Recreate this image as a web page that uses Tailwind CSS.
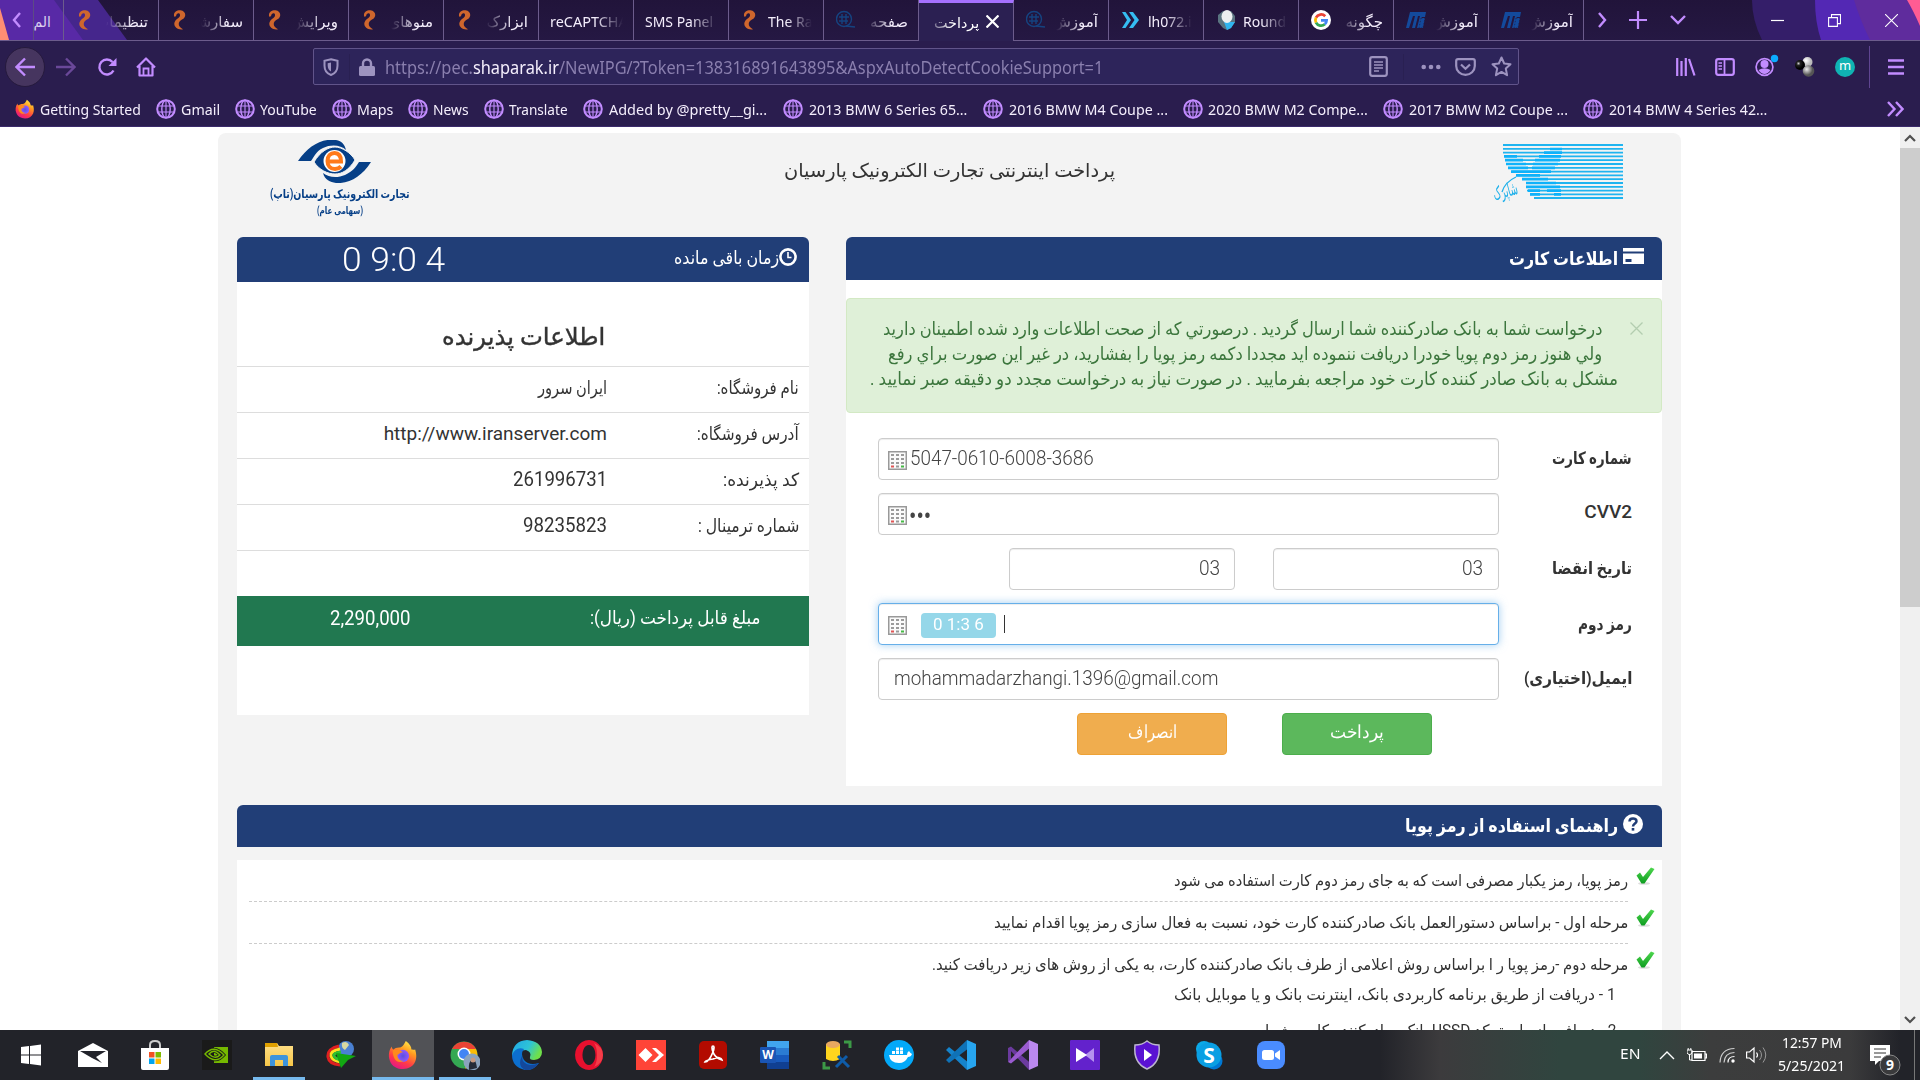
<!DOCTYPE html>
<html lang="fa">
<head>
<meta charset="utf-8">
<title>پرداخت اینترنتی</title>
<script src="https://cdn.jsdelivr.net/npm/@tailwindcss/browser@4"></script>
</head>
<body class="w-[1920px] h-[1080px] overflow-hidden bg-white flex flex-col font-['Noto_Sans','DejaVu_Sans',sans-serif]">

<svg class="absolute w-0 h-0">
  <defs>
    <linearGradient id="ffo" x1="0.8" y1="0" x2="0.3" y2="1"><stop offset="0" stop-color="#fff44f"/><stop offset=".35" stop-color="#ff9a1f"/><stop offset=".7" stop-color="#ff3b47"/><stop offset="1" stop-color="#e31587"/></linearGradient>
    <radialGradient id="ffp"><stop offset="0" stop-color="#5b4fe0"/><stop offset="1" stop-color="#9059ff"/></radialGradient>
    <linearGradient id="edg" x1="0" y1="0" x2="1" y2=".4"><stop offset="0" stop-color="#1fa6e8"/><stop offset=".6" stop-color="#2ec4d6"/><stop offset="1" stop-color="#6fe04a"/></linearGradient>
    <linearGradient id="fold" x1="0" y1="0" x2="0" y2="1"><stop offset="0" stop-color="#ffe08a"/><stop offset="1" stop-color="#f7c648"/></linearGradient>
    <radialGradient id="ballb" cx=".35" cy=".35"><stop offset="0" stop-color="#ccc"/><stop offset=".4" stop-color="#222"/><stop offset="1" stop-color="#000"/></radialGradient>
    <radialGradient id="ballw" cx=".35" cy=".35"><stop offset="0" stop-color="#fff"/><stop offset="1" stop-color="#bbb"/></radialGradient>
    <radialGradient id="ballg" cx=".35" cy=".35"><stop offset="0" stop-color="#eee"/><stop offset="1" stop-color="#555"/></radialGradient>
    <linearGradient id="chk" x1="0" y1="0" x2="0" y2="1"><stop offset="0" stop-color="#4fd84f"/><stop offset="1" stop-color="#0d9c1f"/></linearGradient>
  </defs>
  <symbol id="firefox" viewBox="0 0 32 32"><path d="M19 1c4 3 6 6 6 9 2 0 3 1 4 0 1 4 2 8 0 13-2 5-7 8-13 8S4 28 2 22C0 17 1 11 4 7c0 2 1 3 2 3 1-1 3-2 6-2 3 0 5-3 7-7z" fill="url(#ffo)"/><circle cx="16" cy="17" r="6.5" fill="url(#ffp)"/><path d="M5 11c4-2 8 0 11 2-3 0-4 2-6 3 0 4 3 7 7 6-6 4-12 0-12-11z" fill="#ff8a1c"/></symbol>
  <symbol id="globe" viewBox="0 0 20 20"><g fill="none" stroke="#c28cff"><circle cx="10" cy="10" r="8.8" stroke-width="2"/><ellipse cx="10" cy="10" rx="4.2" ry="8.8" stroke-width="1.4"/><path d="M10 1v18M1.5 7h17M1.5 13h17" stroke-width="1.1"/></g></symbol>
  <symbol id="swirl" viewBox="0 0 20 20"><path d="M3 6C2.500 2 6 0 9.500.300c5.500.700 6.500 6.700 1.500 9.200-4.500 2.500-4.500 7 1 9.800C5.500 20.500 1 15 4.500 10.500 6.500 8 9.300 7.500 9 4.800 8.500 2.500 6 3 5.300 5.200 4.800 6.800 3.200 7.200 3 6z" fill="#cf662d"/></symbol>
  <symbol id="bluenet" viewBox="0 0 20 20"><g fill="none" stroke="#154380" stroke-width="1.4"><circle cx="8" cy="9" r="7.5"/><path d="M3 7h10M3 11h9M6 4v10M10 4v10M10 16l9 1"/></g></symbol>
  <symbol id="chev" viewBox="0 0 20 20"><path d="M1 2h3.500l5.500 8-5.500 8H1l5-8zM8 2h4l6 8-6 8H8l5.500-8z" fill="#35bdf2"/></symbol>
  <symbol id="cube" viewBox="0 0 20 20"><path d="M2 5l5-4h8l4 5v6l-4 6-4 2-4-2-5-6z" fill="#5a7480"/><path d="M8 12h11l-4 6-4 2z" fill="#30b5ef"/><ellipse cx="11" cy="6.500" rx="5.500" ry="6.500" fill="#edf0f0"/></symbol>
  <symbol id="google" viewBox="0 0 20 20"><circle cx="10" cy="10" r="10" fill="#fff"/><g fill="none" stroke-width="2.8"><path d="M14.2 6.2A5.7 5.7 0 0 0 5 7.6" stroke="#ea4335"/><path d="M5 7.6a5.7 5.7 0 0 0 0 5" stroke="#fbbc05"/><path d="M5 12.6a5.7 5.7 0 0 0 8.8 1.7" stroke="#34a853"/><path d="M13.8 14.3a5.7 5.7 0 0 0 1.8-4H10" stroke="#4285f4"/></g></symbol>
  <symbol id="bars" viewBox="0 0 20 20"><path d="M4 2h16l-1 5h-3l-2 11h-3l3-12h-2L9 18H6L9 6H7L3 18H0z" fill="#134a9c"/><path d="M15 8h4l-2 10h-4z" fill="#134a9c" stroke="#22173d" stroke-width=".6" stroke-dasharray="1.5 1.5"/></symbol>
  <symbol id="keypad" viewBox="0 0 19 19"><rect x=".75" y=".75" width="17.5" height="17.5" fill="#fafafa" stroke="#999" stroke-width="1.5"/><g fill="#9a9a9a"><path d="M3 3h3v2H3zM8 3h3v2H8zM13 3h3v2h-3zM3 7h3v2H3zM8 7h3v2H8zM13 7h3v2h-3zM3 11h3v2H3zM8 11h3v2H8zM13 11h3v2h-3zM8 14.5h3v2H8z"/></g><path d="M3 14.5h3v2H3z" fill="#e05555"/><path d="M13 14.5h3v2h-3z" fill="#45b845"/></symbol>
  <symbol id="check" viewBox="0 0 19 19"><ellipse cx="8" cy="16.500" rx="6" ry="1.300" fill="#ddd"/><path d="M.5 8.500l3.500-3 3 4.500 8-9.500 3.500 1.500L8.500 16.500H5.500z" fill="url(#chk)"/></symbol>
</svg>

<header class="h-[127px] shrink-0 bg-[#2a1d4e] text-[#f4eefc] border-b border-[#3b2a6b] flex flex-col">
  <div class="h-[41px] shrink-0 relative flex bg-linear-to-b from-[#21143a] to-[#251843] border-b border-[#6c5c8c]">
    <svg class="absolute left-0 top-0 w-[160px] h-[40px]" viewBox="0 0 160 40"><path d="M0 0h98l29 40H0z" fill="#45268c"/><path d="M0 0h54l29 40H0z" fill="#5829a6"/><path d="M0 8l9 32H0z" fill="#ff8d74"/></svg>
    <svg class="absolute right-0 top-0 w-[168px] h-[40px]" viewBox="0 0 168 40"><path d="M0 0h168v40H10Q0 20 0 0z" fill="#341e69"/><path d="M63 0h105v40H69Q63 22 63 0z" fill="#5328b4"/><path d="M102 0h66v40h-50Q108 20 102 0z" fill="#5f2c9d"/><path d="M155 0h13v26Q161 10 155 0z" fill="#ff5c93"/></svg>
    <div class="relative w-[34px] flex items-center justify-center border-r border-[#5d4a85]"><svg class="w-[10px] h-[16px]" viewBox="0 0 10 16"><path d="M8 1L2 8l6 7" fill="none" stroke="#c28cff" stroke-width="2.4"/></svg></div>
    <div class="relative w-[30px] flex items-center pr-3 border-r border-[#6c5c8c] text-[14px] text-[#d9cfee] pt-0.5" dir="rtl">الم</div>
    <div id="tabs" class="relative flex"></div>
    <div class="relative flex items-center text-[#c28cff]">
      <svg class="w-[10px] h-[16px] ml-[13px]" viewBox="0 0 10 16"><path d="M2 1l6 7-6 7" fill="none" stroke="currentColor" stroke-width="2.4"/></svg>
      <svg class="w-[18px] h-[18px] ml-[22px]" viewBox="0 0 18 18"><path d="M9 0v18M0 9h18" stroke="currentColor" stroke-width="2.2"/></svg>
      <svg class="w-[16px] h-[10px] ml-[23px]" viewBox="0 0 16 10"><path d="M1 1l7 7 7-7" fill="none" stroke="currentColor" stroke-width="2.4"/></svg>
      <svg class="w-[13px] h-[13px] ml-[85px]" viewBox="0 0 13 13"><path d="M0 6.5h13" stroke="#fff" stroke-width="1.2"/></svg>
      <svg class="w-[13px] h-[13px] ml-[44px]" viewBox="0 0 13 13"><path d="M.6 3.6h8.800v8.800H.6zM3.500 3.500V.6h9v9H9.600" fill="none" stroke="#fff" stroke-width="1.100"/></svg>
      <svg class="w-[13px] h-[13px] ml-[44px]" viewBox="0 0 13 13"><path d="M0 0l13 13M13 0L0 13" stroke="#fff" stroke-width="1.100"/></svg>
    </div>
  </div>

  <div class="h-[51px] shrink-0 flex items-center text-[#c28cff]">
    <div class="ml-[5px] w-10 h-10 shrink-0 rounded-full bg-[#46355f] border border-[#261a3d] flex items-center justify-center"><svg class="w-5 h-5" viewBox="0 0 20 20"><path d="M20 10H2M10 1.5L1.5 10l8.500 8.500" fill="none" stroke="currentColor" stroke-width="2.4"/></svg></div>
    <svg class="w-5 h-5 shrink-0 ml-[11px] text-[#6a4899]" viewBox="0 0 20 20"><path d="M0 10h18M10 1.500l8.500 8.500-8.500 8.500" fill="none" stroke="currentColor" stroke-width="2.400"/></svg>
    <svg class="w-5 h-5 shrink-0 ml-[21px]" viewBox="0 0 20 20"><path d="M16.500 13.500A7.500 7.500 0 1 1 15.500 5" fill="none" stroke="currentColor" stroke-width="2.400"/><path d="M19.500 1v8h-8z" fill="currentColor"/></svg>
    <svg class="w-5 h-5 shrink-0 ml-[19px]" viewBox="0 0 20 20"><path d="M1 10.500L10 1.500l9 9M3.500 9v9.500h13V9" fill="none" stroke="currentColor" stroke-width="2.200" stroke-linejoin="round"/><path d="M7.500 18v-6.500h5V18" fill="none" stroke="currentColor" stroke-width="1.800"/></svg>
    <div class="ml-[157px] w-[1206px] shrink-0 h-[37px] bg-[#2d245a] border border-[#61548a] rounded-xs flex items-center text-[#9d93bf]">
      <svg class="w-4 h-[18px] shrink-0 ml-[9px]" viewBox="0 0 16 18"><path d="M8 1.200l6.500 1.500v5c0 5-3 8-6.500 9.300C4.500 15.700 1.500 12.700 1.500 7.700v-5z" fill="none" stroke="currentColor" stroke-width="2"/><path d="M8 4.500v9c-2-1-3.300-3-3.300-6V5.200z" fill="currentColor"/></svg>
      <div class="w-px h-[26px] bg-[#292052] ml-2.5"></div>
      <svg class="w-4 h-[18px] shrink-0 ml-[9px]" viewBox="0 0 16 18"><path d="M4 9V5.500a4 4 0 0 1 8 0V9" fill="none" stroke="currentColor" stroke-width="2.400"/><rect y="8" width="16" height="10" rx="1.500" fill="currentColor"/></svg>
      <div class="w-[984px] shrink-0 ml-2.5 pt-0.5 text-[18px] text-[#8a7fae] whitespace-nowrap"><span data-w="718">https://pec.<span class="text-[#f4eefc]">shaparak.ir</span>/NewIPG/?Token=138316891643895&amp;AspxAutoDetectCookieSupport=1</span></div>
      <svg class="w-[19px] h-[21px] shrink-0" viewBox="0 0 19 21"><rect x="1.200" y="1.200" width="16.600" height="18.600" rx="2" fill="none" stroke="currentColor" stroke-width="2.200"/><path d="M5 6h9M5 9h9M5 12h9M5 15h5" stroke="currentColor" stroke-width="1.500"/></svg>
      <div class="w-px h-[26px] bg-[#292052] ml-[15px]"></div>
      <svg class="w-5 h-5 shrink-0 ml-[17px]" viewBox="0 0 20 20"><g fill="currentColor"><circle cx="2.700" cy="10" r="2.300"/><circle cx="10" cy="10" r="2.300"/><circle cx="17.300" cy="10" r="2.300"/></g></svg>
      <svg class="w-[21px] h-[18px] shrink-0 ml-3.5" viewBox="0 0 21 18"><path d="M1.200 3q0-1.800 1.800-1.800h15q1.800 0 1.800 1.800v5a9.300 8.800 0 0 1-18.600 0z" fill="none" stroke="currentColor" stroke-width="2.200"/><path d="M6 6.500l4.500 4.300L15 6.500" fill="none" stroke="currentColor" stroke-width="2.200"/></svg>
      <svg class="w-[21px] h-[21px] shrink-0 ml-[15px]" viewBox="0 0 21 21"><path d="M10.500 1.500l2.700 6 6.300.7-4.700 4.400 1.300 6.600-5.600-3.300-5.600 3.300 1.300-6.600L1.500 8.200l6.300-.7z" fill="none" stroke="currentColor" stroke-width="2" stroke-linejoin="round"/></svg>
    </div>
    <svg class="w-5 h-[18px] shrink-0 ml-[157px]" viewBox="0 0 20 18"><path d="M1.200 0v18M5.500 3v15M9.800 0v18M13 1l5.500 16.500" fill="none" stroke="currentColor" stroke-width="2.200"/></svg>
    <svg class="w-5 h-[18px] shrink-0 ml-[19px]" viewBox="0 0 20 18"><rect x="1.200" y="1.200" width="17.600" height="15.600" rx="2" fill="none" stroke="currentColor" stroke-width="2.200"/><path d="M9.500 1v16" stroke="currentColor" stroke-width="1.800"/><path d="M3.500 5h3.500M3.500 8h3.500M3.500 11h3.500" stroke="currentColor" stroke-width="1.300"/></svg>
    <svg class="w-6 h-[26px] shrink-0 ml-[20px] -mt-[4px]" viewBox="0 0 24 26"><circle cx="9.500" cy="15" r="8.400" fill="none" stroke="currentColor" stroke-width="1.700"/><circle cx="9.500" cy="12" r="4" fill="currentColor"/><path d="M3.500 18q6-3.500 12 0-2.500 4-6 4t-6-4z" fill="currentColor"/><circle cx="19.500" cy="6.500" r="3.700" fill="#0cabff"/></svg>
    <svg class="w-5 h-5 shrink-0 ml-[16px]" viewBox="0 0 20 20"><circle cx="12.500" cy="5" r="5" fill="url(#ballw)"/><circle cx="5" cy="8" r="5" fill="url(#ballb)"/><circle cx="13.500" cy="14" r="5.800" fill="url(#ballg)"/></svg>
    <div class="ml-5 w-5 h-5 shrink-0 rounded-full bg-[#10b3b3] text-white text-[13px] leading-[17px] text-center">m</div>
    <div class="ml-[14px] w-px h-[42px] bg-[#5f4591]"></div>
    <svg class="w-4 h-4 shrink-0 ml-[18px]" viewBox="0 0 16 16"><path d="M0 1.500h16M0 8h16M0 14.500h16" stroke="currentColor" stroke-width="2.300"/></svg>
  </div>

  <div id="marks" class="h-[34px] pl-[15px] flex items-center"></div>
</header>

<main dir="rtl" class="h-[903px] shrink-0 overflow-hidden flex font-['Roboto','DejaVu_Sans',sans-serif] text-[#333]">
  <div class="w-5 bg-[#f0f0f0] shrink-0 flex flex-col items-center">
    <svg class="w-3 h-[21px] shrink-0" viewBox="0 0 12 21"><path d="M1 14l5-5 5 5" fill="none" stroke="#505050" stroke-width="2.200"/></svg>
    <div class="w-full h-[459px] bg-[#cdcdcd]"></div>
    <svg class="w-3 h-[21px] shrink-0 mt-auto" viewBox="0 0 12 21"><path d="M1 8l5 5 5-5" fill="none" stroke="#505050" stroke-width="2.200"/></svg>
  </div>
  <div class="w-[1463px] mr-[219px] mt-[6px] h-[897px] shrink-0 bg-[#f3f3f3] rounded-t-lg px-[19px] flex flex-col">
    <div class="h-[104px] shrink-0 flex items-start">
      <div class="relative w-[130px] shrink-0 mr-[39px] mt-[11px] h-[62px]">
        <svg class="w-[130px] h-[62px]" viewBox="0 0 130 62"><path d="M10 1h120M10 4.800h120M10 8.600h120M12 12.400h118M13 16.200h117M14 20h116M16 23.800h114M19 27.600h111M23 31.400h107M29 35.200h101M33 39h97M33 42.800h97M34 46.600h96M37 50.400h93M41 54h89" stroke="#1fb4f0" stroke-width="1.800"/><path d="M11 12.400h13M12 16.200h18M13 20h20M15 23.800h20M18 27.600h22M23 31.400h24M29 35.200h26M33 39h30M33 42.800h34M35 46.600h12M54 46.600h14M37 50.400h10M61 50.400h7M57 5h12M51 8.600h18M46 12.400h22M42 16.200h25M40 20h25M39 23.800h23M38 27.600h20" stroke="#0eb2fa" stroke-width="2.700"/><path d="M23 33Q12 38 9 48" fill="none" stroke="#1fb0ea" stroke-width="1.300"/></svg>
        <div class="absolute left-0 top-[33px] w-[25px] text-[#1fb0ea] text-[18px] leading-[28px] -rotate-[15deg]"><span data-w="25">شاپرک</span></div>
      </div>
      <div class="text-[19px] leading-7 mt-[24px] mr-[378px]"><span data-w="331">پرداخت اینترنتی تجارت الکترونیک پارسیان</span></div>
      <div class="w-[140px] shrink-0 mr-auto ml-[33px] mt-[7px] flex flex-col items-center text-[#063f87] font-bold">
        <svg class="w-[73px] h-[43px] mr-2 -ml-1" viewBox="0 0 73 43"><path d="M0 21C10 6 24-2 38 0c6 1 9 5 10 10C43 5 33 4 25 8c-7 3-9 9-12 13z" fill="#063f87"/><path d="M73 22C64 36 52 44 38 43c-6-1-11-3-13-10 6 5 15 5 22 2 8-4 11-8 14-13z" fill="#063f87"/><path d="M16 22C22 12 30 7 37 7s16 6 20 13c-6 10-13 14-20 14s-16-4-21-12z" fill="#063f87" stroke="#f3f3f3" stroke-width="1"/><circle cx="36.500" cy="21" r="11" fill="#fff"/><path d="M30.500 21.500H43C43 15 40 13 36.500 13c-4 0-7 3-7 8s3 8 7.500 8c2.500 0 4.500-1 6-2.500" fill="none" stroke="#ff7a1a" stroke-width="4"/></svg>
        <div class="text-[12px] leading-4 mt-[3px]"><span data-w="140">تجارت الکترونیک پارسیان(تاپ)</span></div>
        <div class="text-[10px] leading-3 mt-[3px]"><span data-w="46">(سهامی عام)</span></div>
      </div>
    </div>

    <div class="flex justify-between items-start">
      <section class="w-[816px] h-[549px] bg-white rounded-t-md">
        <div class="h-[43px] bg-[#213e77] rounded-t-md text-white flex items-center pr-[18px]">
          <svg class="w-[21px] h-[16px] shrink-0 -mt-[5px]" viewBox="0 0 21 16"><path d="M0 0h21v3.500H0zM0 5.500h21V16H0zM2.500 11v3h6v-3z" fill="#fff" fill-rule="evenodd"/></svg>
          <div class="mr-[5px] text-[18px] font-bold"><span data-w="109">اطلاعات کارت</span></div>
        </div>
        <div class="mt-[18px] h-[115px] bg-[#dff0d8] border border-[#d3e9c4] rounded text-[#3c763d] pt-[17px] pr-[18px] flex items-start text-[18px]">
          <svg class="w-[13px] h-[13px] shrink-0 mt-[6px]" viewBox="0 0 13 13"><path d="M.5.5l12 12M12.500.5l-12 12" stroke="#b3cdb0" stroke-width="1.300"/></svg>
          <div class="leading-[25px] whitespace-nowrap flex flex-col -mr-[13px]">
            <div class="pr-[41px] h-[25px]"><span data-w="719">درخواست شما به بانک صادرکننده شما ارسال گرديد . درصورتي که از صحت اطلاعات وارد شده اطمينان داريد</span></div>
            <div class="pr-[41px] h-[25px]"><span data-w="714">ولي هنوز رمز دوم پويا خودرا دريافت ننموده ايد مجددا دکمه رمز پويا را بفشاريد، در غير اين صورت براي رفع</span></div>
            <div class="pr-[25px] h-[25px]"><span data-w="748">مشکل به بانک صادر کننده کارت خود مراجعه بفرماييد . در صورت نياز به درخواست مجدد دو دقيقه صبر نماييد .</span></div>
          </div>
        </div>
        <div class="mt-[25px] pr-[30px] flex flex-col gap-[13px] text-[20px] font-light text-[#444]">
          <div class="h-[42px] flex"><div class="w-[133px] shrink-0 pt-[6px] text-[17px] leading-7 font-bold text-[#333]"><span data-w="80">شماره کارت</span></div>
            <div dir="ltr" class="w-[621px] border border-[#ccc] rounded bg-white shadow-[inset_0_1px_1px_rgba(0,0,0,.075)] flex items-start pl-[9px]"><svg class="w-[19px] h-[19px] shrink-0 mt-3"><use href="#keypad"/></svg><div class="ml-[3px] leading-[38px]"><span data-w="184">5047-0610-6008-3686</span></div></div></div>
          <div class="h-[42px] flex"><div class="w-[133px] shrink-0 pt-[5px] text-[19px] leading-7 font-medium text-[#333]"><span data-w="48">CVV2</span></div>
            <div dir="ltr" class="w-[621px] border border-[#ccc] rounded bg-white shadow-[inset_0_1px_1px_rgba(0,0,0,.075)] flex items-start pl-[9px]"><svg class="w-[19px] h-[19px] shrink-0 mt-3"><use href="#keypad"/></svg><div class="ml-0.5 leading-[45px] text-[26px] font-normal"><span data-w="22">•••</span></div></div></div>
          <div class="h-[42px] flex"><div class="w-[133px] shrink-0 pt-[6px] text-[17px] leading-7 font-bold text-[#333]"><span data-w="80">تاریخ انقضا</span></div>
            <div class="w-[226px] border border-[#ccc] rounded bg-white shadow-[inset_0_1px_1px_rgba(0,0,0,.075)] pr-[15px] leading-[38px]"><span data-w="21">03</span></div>
            <div class="w-[226px] mr-[38px] border border-[#ccc] rounded bg-white shadow-[inset_0_1px_1px_rgba(0,0,0,.075)] pr-[14px] leading-[38px]"><span data-w="21">03</span></div></div>
          <div class="h-[42px] flex"><div class="w-[133px] shrink-0 pt-[7px] text-[17px] leading-7 font-bold text-[#333]"><span data-w="54">رمز دوم</span></div>
            <div dir="ltr" class="w-[621px] border border-[#66afe9] rounded bg-white shadow-[inset_0_1px_1px_rgba(0,0,0,.075),0_0_8px_rgba(102,175,233,.6)] flex items-start pl-[9px]"><svg class="w-[19px] h-[19px] shrink-0 mt-3"><use href="#keypad"/></svg>
              <div class="ml-[14px] mt-[9px] w-[75px] h-[25px] rounded bg-[#95d7e9] text-white text-[16px] font-normal leading-[24px] pl-3"><span data-w="51">0 1:3 6</span></div>
              <div class="ml-2 mt-[11px] w-px h-[18px] bg-[#333]"></div></div></div>
          <div class="h-[42px] flex"><div class="w-[133px] shrink-0 pt-[6px] text-[17px] leading-7 font-bold text-[#333]"><span data-w="108">ایمیل(اختیاری)</span></div>
            <div dir="ltr" class="w-[621px] border border-[#ccc] rounded bg-white shadow-[inset_0_1px_1px_rgba(0,0,0,.075)] pl-[15px] leading-[38px]"><span data-w="324">mohammadarzhangi.1396@gmail.com</span></div></div>
          <div class="h-[42px] flex pr-[200px] gap-[55px] text-[18px] text-white text-center leading-[35px]">
            <div class="w-[150px] rounded bg-[#5cb85c] border border-[#4cae4c]"><span data-w="54">پرداخت</span></div>
            <div class="w-[150px] rounded bg-[#f0ad4e] border border-[#eea236]"><span data-w="49">انصراف</span></div>
          </div>
        </div>
      </section>

      <section class="w-[572px] h-[478px] bg-white rounded-t-md">
        <div class="h-[45px] bg-[#213e77] rounded-t-md text-white flex items-center pr-3">
          <svg class="w-[18px] h-[18px] shrink-0 -mt-1.5" viewBox="0 0 18 18"><circle cx="9" cy="9" r="7.600" fill="none" stroke="#fff" stroke-width="2.600"/><path d="M9 4v5.500h3.500" fill="none" stroke="#fff" stroke-width="1.600"/></svg>
          <div class="text-[18px] leading-[40px] -mt-[3px]"><span data-w="105">زمان باقی مانده</span></div>
          <div dir="ltr" class="mr-auto ml-[105px] text-[33px] leading-[44px] font-light"><span data-w="103">0 9:0 4</span></div>
        </div>
        <div class="h-[84px] pt-[39px] text-[24px] leading-8 font-medium pr-[204px] [-webkit-text-stroke:0.4px_#333]"><span data-w="163">اطلاعات پذیرنده</span></div>
        <div class="text-[18px] leading-[41px]">
          <div class="h-[46px] border-t border-[#ddd] flex pr-2.5"><div class="w-[192px]"><span data-w="82">نام فروشگاه:</span></div><div><span data-w="69">ایران سرور</span></div></div>
          <div class="h-[46px] border-t border-[#ddd] flex pr-2.5"><div class="w-[192px]"><span data-w="102">آدرس فروشگاه:</span></div><div class="text-[19px]"><span data-w="223">http://www.iranserver.com</span></div></div>
          <div class="h-[46px] border-t border-[#ddd] flex pr-2.5"><div class="w-[192px]"><span data-w="76">کد پذیرنده:</span></div><div class="text-[20px]"><span data-w="94">261996731</span></div></div>
          <div class="h-[47px] border-y border-[#ddd] flex pr-2.5"><div class="w-[192px]"><span data-w="101">شماره ترمینال :</span></div><div class="text-[20px]"><span data-w="84">98235823</span></div></div>
        </div>
        <div class="mt-[45px] h-[50px] bg-[#217850] text-white flex pr-12 text-[18px] leading-[44px]">
          <div><span data-w="171">مبلغ قابل پرداخت (ریال):</span></div>
          <div class="mr-auto ml-[93px] text-[20px]"><span data-w="81">2,290,000</span></div>
        </div>
      </section>
    </div>

    <div class="mt-[19px] h-[42px] shrink-0 bg-[#213e77] rounded-t-md text-white flex items-center pr-[19px]">
      <svg class="w-5 h-5 shrink-0 -mt-1" viewBox="0 0 20 20"><circle cx="10" cy="10" r="10" fill="#fff"/><path d="M6.500 7.500c0-4 7-4 7-.3 0 2.300-3.500 2.300-3.500 5.300" fill="none" stroke="#213e77" stroke-width="2.500"/><rect x="8.700" y="14" width="2.600" height="2.600" fill="#213e77"/></svg>
      <div class="mr-[5px] text-[18px] font-bold leading-[40px]"><span data-w="213">راهنمای استفاده از رمز پویا</span></div>
    </div>
    <div class="mt-[13px] h-[170px] shrink-0 bg-white pr-[7px] pl-3 text-[16px] whitespace-nowrap">
      <div class="flex h-[42px]"><svg class="w-[19px] h-[19px] shrink-0 mt-[7px]"><use href="#check"/></svg><div class="mr-2 grow border-b border-dashed border-[#ccc] leading-[42px]"><span data-w="454">رمز پویا، رمز یکبار مصرفی است که به جای رمز دوم کارت استفاده می شود</span></div></div>
      <div class="flex h-[42px]"><svg class="w-[19px] h-[19px] shrink-0 mt-[7px]"><use href="#check"/></svg><div class="mr-2 grow border-b border-dashed border-[#ccc] leading-[42px]"><span data-w="634">مرحله اول - براساس دستورالعمل بانک صادرکننده کارت خود، نسبت به فعال سازی رمز پویا اقدام نمایید</span></div></div>
      <div class="flex"><svg class="w-[19px] h-[19px] shrink-0 mt-[7px]"><use href="#check"/></svg><div class="mr-2 grow leading-[42px]"><span data-w="696">مرحله دوم -رمز پویا ر ا براساس روش اعلامی از طرف بانک صادرکننده کارت، به یکی از روش های زیر دریافت کنید.</span>
        <div class="pr-3 -mt-[9px] leading-[36px]"><span data-w="442">1 - دریافت از طریق برنامه کاربردی بانک، اینترنت بانک و یا موبایل بانک</span></div>
        <div class="pr-3 leading-[36px]"><span data-w="351">2 - دریافت از طریق کد USSD بانک صادرکننده کارت شما</span></div></div></div>
    </div>
  </div>
</main>

<footer class="h-[50px] shrink-0 flex text-white bg-[linear-gradient(90deg,#222329_0,#222329_1380px,#3c3b3d_1440px,#30453f_1560px,#30453f_1640px,#3c3d3d_1710px,#3b3b3c_1850px,#222329_1900px)]">
  <div id="bar" class="flex"></div>
  <div class="ml-auto flex items-center shrink-0">
    <div class="text-[14px] mr-[19px] -mt-[4px]"><span data-w="20">EN</span></div>
    <svg class="w-4 h-[9px] mr-px" viewBox="0 0 16 9"><path d="M1 8l7-7 7 7" fill="none" stroke="#fff" stroke-width="1.400"/></svg>
    <svg class="w-5 h-[14px] ml-[11px]" viewBox="0 0 20 14"><path d="M5 3.500h13v9H5zM18 6h1.500v4H18" fill="none" stroke="#fff" stroke-width="1.200"/><path d="M7 5.500h8v5H7z" fill="#fff"/><path d="M0 2h5v3l-2.500 2L0 5zM1.200 0v2M3.800 0v2M2.500 6v6H5" fill="none" stroke="#fff"/></svg>
    <svg class="w-4 h-4 ml-3" viewBox="0 0 16 16"><circle cx="14" cy="14" r="1.700" fill="#fff"/><g fill="none" stroke="#fff" stroke-width="1.200"><path d="M9 15.500q0-6 6.500-6"/><path d="M5 15.500Q5.500 6 15.500 5.500M1 15.500Q1.500 2 15.500 1.500" opacity=".75"/></g></svg>
    <svg class="w-[21px] h-[18px] ml-[11px]" viewBox="0 0 21 18"><path d="M.6 6h3L8 2v14l-4.400-4H.6z" fill="none" stroke="#fff" stroke-width="1.200"/><path d="M10.500 6.500q2 2.500 0 5" stroke="#fff" fill="none" stroke-width="1.200"/><path d="M13.500 4q4 5 0 10M17 1.500q5.500 7.500 0 15" stroke="#999" fill="none"/></svg>
    <div class="ml-[11px] w-[68px] flex flex-col items-center text-[15px] leading-[23px] -mt-0.5"><div><span data-w="60">12:57 PM</span></div><div><span data-w="67">5/25/2021</span></div></div>
    <div class="relative ml-6 w-[45px] h-[50px] border-r border-[#777]"><svg class="absolute left-0 top-[14px] w-8 h-8" viewBox="0 0 32 32"><path d="M0 1h20v16H9l-4 4v-4H0z" fill="#fff"/><path d="M4 5h12M4 9h12M4 13h7" stroke="#333"/><circle cx="20" cy="21" r="10" fill="#3a3a3c" stroke="#888"/></svg><span class="absolute left-4 top-[25px] leading-5 text-[14px] font-bold">9</span></div>
    <div class="w-[5px]"></div>
  </div>
</footer>

<script>
const tabs = [
  ['swirl','تنظیمات',1],['swirl','سفارشی',1],['swirl','ویرایش',1],['swirl','منوهای',1],['swirl','ابزارک‌ها',1],
  ['','reCAPTCHA',0],['','SMS Panel',0],['swirl','The Rank',0],['bluenet','صفحه',1],['active','پرداخت',1],
  ['bluenet','آموزش',1],['chev','lh072.ir',0],['cube','Round',0],['google','چگونه',1],['bars','آموزش',1],['bars','آموزش',1]];
document.getElementById('tabs').innerHTML = tabs.map(([icon, title, rtl]) => {
  if (icon === 'active') return `<div class="w-[95px] h-[41px] bg-[#2b2052] border-t-3 border-[#a571ff] border-r border-r-[#6c5c8c] flex items-center text-[14px] text-white pb-0.5"><div dir="rtl" class="w-[46px] ml-[14px] pt-0.5 whitespace-nowrap overflow-hidden [mask-image:linear-gradient(to_right,#0005,#000_20px)]"><span data-w="45">${title}</span></div><svg class="w-[13px] h-[13px] ml-[7px]" viewBox="0 0 13 13"><path d="M.5.5l12 12M12.500.5l-12 12" stroke="#fff" stroke-width="2.200"/></svg></div>`;
  if (!icon) return `<div class="w-[95px] border-r border-[#6c5c8c] flex items-center text-[15px] pt-0.5"><div class="w-[73px] ml-[11px] whitespace-nowrap overflow-hidden [mask-image:linear-gradient(to_left,transparent,#000_28px)]"><span data-w="${title[0]==='S'?68:78}">${title}</span></div></div>`;
  const ic = `<svg class="w-5 h-5 ml-3 shrink-0"><use href="#${icon}"/></svg>`;
  return rtl
    ? `<div class="w-[95px] border-r border-[#6c5c8c] flex items-center text-[15px]">${ic}<div dir="rtl" class="w-[42px] ml-[10px] pt-0.5 whitespace-nowrap overflow-hidden [mask-image:linear-gradient(to_right,transparent,#000_26px)]">${title}</div></div>`
    : `<div class="w-[95px] border-r border-[#6c5c8c] flex items-center text-[14px]">${ic}<div class="w-[44px] ml-[7px] pt-0.5 whitespace-nowrap overflow-hidden [mask-image:linear-gradient(to_left,transparent,#000_26px)]">${title}</div></div>`;
}).join('');

// [label, text width, icon left edge, text left edge]
const marks = [['Getting Started',101,15,40],['Gmail',39,156,181],['YouTube',57,235,260],['Maps',36,332,357],['News',36,408,433],['Translate',59,484,509],['Added by @pretty__gi...',158,583,609],['2013 BMW 6 Series 65...',158,783,809],['2016 BMW M4 Coupe ...',159,983,1009],['2020 BMW M2 Compe...',160,1183,1208],['2017 BMW M2 Coupe ...',159,1383,1409],['2014 BMW 4 Series 42...',158,1583,1609]];
document.getElementById('marks').innerHTML = marks.map(([t, w, x, tx], i) => {
  const next = i < 11 ? marks[i + 1][2] : 1887;
  return `<div class="shrink-0 flex items-center text-[15px] whitespace-nowrap" style="width:${next - x}px"><svg class="w-5 h-5 shrink-0" style="margin-right:${tx - x - 20}px"><use href="#${i ? 'globe' : 'firefox'}"/></svg><div><span data-w="${w}">${t}</span></div></div>`;
}).join('') + '<svg class="w-[17px] h-4 shrink-0" viewBox="0 0 17 16"><path d="M1 1l6.500 7L1 15M9 1l6.500 7L9 15" fill="none" stroke="#c28cff" stroke-width="2.400"/></svg>';

const apps = [
  '<path d="M5 7l8-1v8.500H5zM14 6l11-1.500v10H14zM5 15.500h8V24l-8-1zM14 15.500h11v10L14 24z" fill="#fff"/>',
  '<path d="M0 11L15 3l15 8v16H0z" fill="#fff"/><path d="M2 11h26L18 17l6 6-10-5z" fill="#22232b"/>',
  '<path d="M10 9V5q0-4 5-4t5 4v4" fill="none" stroke="#ccc" stroke-width="2"/><path d="M1 8h28v20q0 2-2 2H3q-2 0-2-2z" fill="#fff"/><path d="M9 12h5.500v5.500H9z" fill="#f25022"/><path d="M15.500 12H21v5.500h-5.500z" fill="#7fba00"/><path d="M9 18.500h5.500V24H9z" fill="#00a4ef"/><path d="M15.500 18.500H21V24h-5.500z" fill="#ffb900"/>',
  '<path d="M0 0h30v30H0z" fill="#1a1a1a"/><path d="M12 7h14v16H12z" fill="#76b900"/><path d="M3 14q9-10 19 1-9 10-19-1zM7 14q5-6 11 1-5 5-11-1z" fill="none" stroke="#1a1a1a" stroke-width="3"/><path d="M3 14q9-10 19 1-9 10-19-1zM7 14q5-6 11 1-5 5-11-1z" fill="none" stroke="#76b900" stroke-width="1.400"/>',
  '<path d="M1 3h12l2 3h14v20H1z" fill="url(#fold)"/><path d="M1 3h12l1 4H1z" fill="#e0a000"/><path d="M6 26V17q0-2 2-2h14q2 0 2 2v9h-5v-6h-8v6z" fill="#3e94dc"/>',
  '<circle cx="20" cy="9" r="8" fill="#4a80d2"/><path d="M16 3q5-3 7 2l-4 5q-4-2-3-7z" fill="#d8d8a0"/><g fill="none" stroke-width="3"><path d="M13 6Q1 9 2 17q1 7 12 8" stroke="#e02020"/><path d="M14 9Q4 11 5 16q1 5 10 6" stroke="#ffe020"/><path d="M15 12q-8 1-7 4 1 3 8 4" stroke="#30c030"/></g><path d="M10 13l20 3-8 4-7 8z" fill="#12a812"/>',
  '<use href="#firefox" width="30" height="30"/>',
  '<circle cx="14" cy="15" r="13.500" fill="#34a853"/><path d="M2 9a13.500 13.500 0 0 1 24 0H14z" fill="#ea4335"/><path d="M26 9a13.500 13.500 0 0 1-11 19.500L20 15l-3-6z" fill="#fbbc05"/><circle cx="14" cy="14" r="6.500" fill="#fff"/><circle cx="14" cy="14" r="5" fill="#4285f4"/><circle cx="22" cy="22" r="8.500" fill="#8aa3bd"/><path d="M19 30q-1-9 4-11 3 1 4 9z" fill="#252c38"/><circle cx="23" cy="20" r="2.500" fill="#c79a80"/>',
  '<path d="M0 15Q1 1 15 0q14 1 15 12 0 7-8 8-5 0-4-3 2-5-4-7-8 0-11 8z" fill="url(#edg)"/><path d="M0 15Q4 6 12 9q-4 5 0 11 5 6 15 3-6 8-14 7Q0 27 0 15z" fill="#0c6fcf"/><path d="M10 16q0 8 8 9 5 0 9-2-6 8-14 7-8-4-3-14z" fill="#14489b"/>',
  '<path d="M15 0a14 15 0 1 0 .1 0zm0 5a6.500 10 0 1 1-.1 0z" fill="#e8102e" fill-rule="evenodd"/><path d="M20 3q9 4 9 12t-9 12q3-4 3-12T20 3z" fill="#ff5a5a" opacity=".6"/>',
  '<path d="M0 0h30v30H0z" fill="#ff4438"/><path d="M9.500 8l7 7-7 7-7-7zM16 8h4l8 7-8 7h-4l7-7z" fill="#fff"/>',
  '<rect x="1" y="1" width="28" height="28" rx="5" fill="#b30b00"/><path d="M7 22q4 0 8-10 2-6 0-6t0 6q2 6 9 8-1-4-9-1-7 1-8 3z" fill="none" stroke="#fff" stroke-width="1.700"/>',
  '<path d="M7 1h22v7H7z" fill="#41a5ee"/><path d="M7 8h22v7H7z" fill="#2b7cd3"/><path d="M7 15h22v7H7z" fill="#185abd"/><path d="M7 22h22v7H7z" fill="#103f91"/><rect y="7" width="16" height="16" rx="1" fill="#1a55b4"/><text x="8" y="19" text-anchor="middle" font-size="12" font-weight="700" fill="#fff">W</text>',
  '<path d="M4 4v15q7 4 14 0V4z" fill="#ffd51e"/><ellipse cx="11" cy="4.500" rx="7" ry="3.500" fill="#e8a860"/><path d="M22 2h6v6M2 22v6h6" fill="none" stroke="#3c9a47" stroke-width="3"/><path d="M14 27l11-11M16 16l11 11" stroke="#0f5ca8" stroke-width="3"/>',
  '<circle cx="15" cy="15" r="15" fill="#03a9f9"/><path d="M5 15h18q0-3 2-4 1 2 3 3-1 3-4 3-3 6-9 6-9 0-10-8z" fill="#fff"/><path d="M8 11h3v3H8zM12 11h3v3h-3zM16 11h3v3h-3zM12 7.500h3v3h-3zM16 7.500h3v3h-3z" fill="#fff"/>',
  '<path d="M0 10l3-3 20 16-2 7z" fill="#1583cb"/><path d="M0 20l3 3L23 8l-2-8z" fill="#0f72b7"/><path d="M21 0l9 4v22l-9 4z" fill="#27a5ef"/>',
  '<path d="M0 8l3-1.500 20 17-2 6.500zM0 22V8l3 3v8z" fill="#6b3a9e"/><path d="M0 22l3 1.500L23 7l-2-7z" fill="#9a5bd0"/><path d="M21 0l9 4v22l-9 4z" fill="#bb88ee"/>',
  '<rect width="30" height="30" rx="1" fill="#6322cc"/><path d="M24 8v14l-9-7z" fill="#b592ee"/><path d="M6 8v14l11-7z" fill="#fff"/>',
  '<path d="M15 1q5 4 12 4 2 18-12 24Q1 23 3 5q7 0 12-4z" fill="#5a12d2" stroke="#bdb6cf" stroke-width="1.500"/><path d="M12 9v12l8-6z" fill="#fff"/>',
  '<circle cx="10" cy="9" r="8" fill="#0ba9e8"/><circle cx="20" cy="21" r="8.500" fill="#0078d4"/><circle cx="15" cy="15" r="12.500" fill="#0a9fe3"/><text x="15" y="22.500" text-anchor="middle" font-size="21" font-weight="700" fill="#fff">S</text>',
  '<rect x="1" y="1" width="28" height="28" rx="8" fill="#4a8cff"/><rect x="6" y="10" width="12" height="10" rx="2.500" fill="#fff"/><path d="M19 13.500l5-3.500v10l-5-3.500z" fill="#fff"/>'];
const under = {4: 'border-b-3 border-[#76b9ed]', 6: 'bg-[#515256] border-b-3 border-[#76b9ed]', 7: 'border-b-3 border-[#76b9ed]'};
document.getElementById('bar').innerHTML = apps.map((a, i) =>
  `<div class="w-[62px] h-[50px] px-[5px] flex justify-center"><div class="${i === 6 ? 'w-[62px] -mx-[5px]' : 'w-[52px]'} shrink-0 pt-2.5 flex justify-center ${under[i] || ''}"><svg class="w-[30px] h-[30px]" viewBox="0 0 30 30">${a}</svg></div></div>`).join('');

function fit(el) {
  const w = +el.dataset.w, n = el.offsetWidth;
  if (!n) return;
  const rtl = getComputedStyle(el).direction === 'rtl';
  el.style.transformOrigin = rtl ? 'right' : 'left';
  el.style[rtl ? 'marginLeft' : 'marginRight'] = (w - n) + 'px';
  el.style.transform = `scaleX(${w / n})`;
}
const watcher = new ResizeObserver(entries => entries.forEach(e => fit(e.target)));
const labels = [...document.querySelectorAll('[data-w]')];
labels.forEach(el => {
  el.style.display = 'inline-block';
  el.style.whiteSpace = 'nowrap';
  fit(el);
  watcher.observe(el);
});
addEventListener('load', () => labels.forEach(fit));
</script>
</body>
</html>
